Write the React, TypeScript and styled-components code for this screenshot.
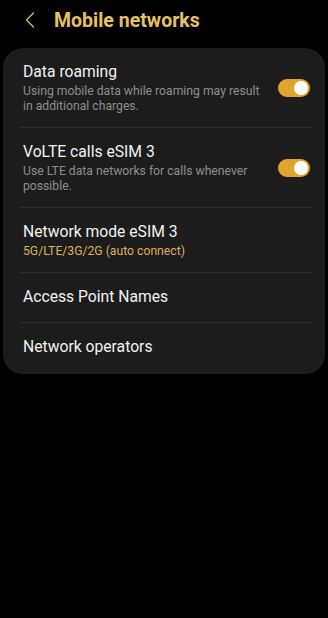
import React, { useState } from 'react';
import styled, { createGlobalStyle } from 'styled-components';

const GlobalStyle = createGlobalStyle`
  html, body {
    margin: 0;
    padding: 0;
    background: #000;
  }
  body {
    font-family: Roboto, "Noto Sans", sans-serif;
    -webkit-font-smoothing: antialiased;
  }
`;

const Screen = styled.div`
  width: 328px;
  height: 618px;
  background: #000;
  overflow: hidden;
`;

const Header = styled.header`
  height: 48px;
  display: flex;
  align-items: center;
  padding: 0 0 8px 22px;
  box-sizing: border-box;
  gap: 16px;
`;

const BackButton = styled.button`
  width: 16px;
  height: 24px;
  padding: 0;
  border: none;
  background: none;
  display: flex;
  align-items: center;
  justify-content: center;
  cursor: pointer;
`;

const Title = styled.h1`
  margin: 0;
  font-size: 19.5px;
  font-weight: 700;
  color: #e6c064;
`;

const Card = styled.section`
  margin: 0 3px;
  background: #1c1c1c;
  border-radius: 20px;
  overflow: hidden;
  padding-bottom: 2px;
`;

const Row = styled.div<{ $hasSub: boolean }>`
  display: flex;
  align-items: center;
  padding: 14px 15px ${(p) => (p.$hasSub ? '13px' : '15px')} 20px;
  gap: 12px;
  cursor: pointer;
`;

const Divider = styled.div`
  height: 1px;
  background: #2d2d2d;
  margin: 0 12px 0 17px;
`;

const Texts = styled.div`
  flex: 1;
  min-width: 0;
`;

const RowTitle = styled.div`
  font-size: 15.7px;
  line-height: 20px;
  color: #f2f2f2;
`;

const RowSub = styled.div<{ $accent?: boolean }>`
  margin-top: 2px;
  font-size: 12.2px;
  line-height: 15px;
  color: ${(p) => (p.$accent ? '#dcb05c' : '#8d8d8d')};
  padding-right: 6px;
`;

const Track = styled.button<{ $on: boolean }>`
  flex: none;
  width: 32px;
  height: 18px;
  border-radius: 9px;
  border: none;
  padding: 0 2px;
  display: flex;
  align-items: center;
  justify-content: ${(p) => (p.$on ? 'flex-end' : 'flex-start')};
  background: ${(p) => (p.$on ? '#e0a62b' : '#555')};
  cursor: pointer;
`;

const Thumb = styled.span`
  width: 14px;
  height: 14px;
  border-radius: 50%;
  background: #fff;
`;

interface Item {
  title: string;
  sub?: string;
  accent?: boolean;
  toggle?: boolean;
}

const items: Item[] = [
  {
    title: 'Data roaming',
    sub: 'Using mobile data while roaming may result in additional charges.',
    toggle: true,
  },
  {
    title: 'VoLTE calls eSIM 3',
    sub: 'Use LTE data networks for calls whenever possible.',
    toggle: true,
  },
  { title: 'Network mode eSIM 3', sub: '5G/LTE/3G/2G (auto connect)', accent: true },
  { title: 'Access Point Names' },
  { title: 'Network operators' },
];

const Toggle: React.FC<{ initial: boolean }> = ({ initial }) => {
  const [on, setOn] = useState(initial);
  return (
    <Track $on={on} onClick={() => setOn(!on)} aria-pressed={on}>
      <Thumb />
    </Track>
  );
};

const App: React.FC = () => {
  return (
    <Screen>
      <GlobalStyle />
      <Header>
        <BackButton aria-label="Back">
          <svg width="10" height="16" viewBox="0 0 10 16" fill="none">
            <path d="M8.5 1L1.5 8L8.5 15" stroke="#d9b464" strokeWidth="1.4" strokeLinecap="round" strokeLinejoin="round" />
          </svg>
        </BackButton>
        <Title>Mobile networks</Title>
      </Header>
      <Card>
        {items.map((item, i) => (
          <React.Fragment key={item.title}>
            {i > 0 && <Divider />}
            <Row $hasSub={!!item.sub}>
              <Texts>
                <RowTitle>{item.title}</RowTitle>
                {item.sub && <RowSub $accent={item.accent}>{item.sub}</RowSub>}
              </Texts>
              {item.toggle && <Toggle initial={true} />}
            </Row>
          </React.Fragment>
        ))}
      </Card>
    </Screen>
  );
};

export default App;
